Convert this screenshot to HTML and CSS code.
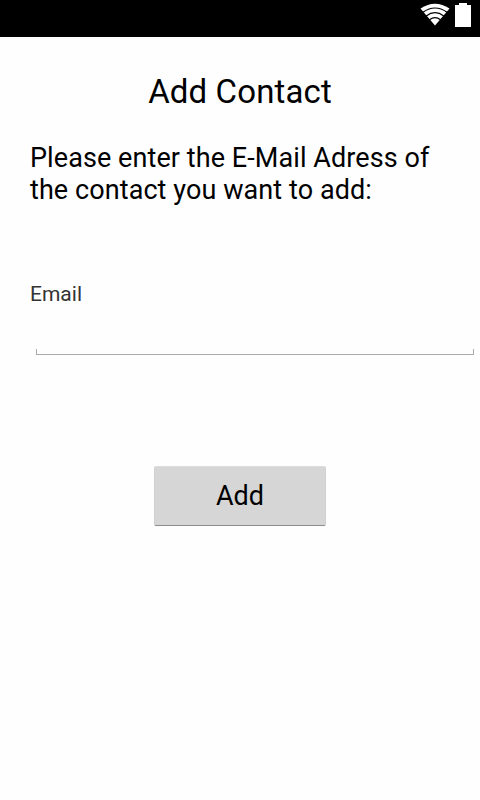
FILE: index.html
```html
<!DOCTYPE html>
<html lang="en">
<head>
<meta charset="utf-8">
<title>Add Contact</title>
<link rel="stylesheet" href="styles.css">
</head>
<body>
<header class="status">
<svg class="wifi" width="30" height="23" viewBox="0 0 30 23"><path fill="#fff" d="M.5 5.500Q15-4 29.500 5.500L15 22.500Z"/><g fill="none" stroke="#000" stroke-width="1.200"><path d="M3 9.200Q15 .8 27 9.200M6.200 13Q15 6.400 23.800 13M9.500 16.800Q15 12.400 20.500 16.800"/></g></svg>
<svg class="battery" width="16" height="24" viewBox="0 0 16 24"><path fill="#fff" d="M4 0h8v2h4v22H0V2h4z"/></svg>
</header>
<main class="screen">
<h1 class="title">Add Contact</h1>
<p class="message">Please enter the E-Mail Adress of<br>the contact you want to add:</p>
<label class="label" for="email">Email</label>
<div class="field"><input class="input" id="email" type="email"></div>
<button class="button" type="button">Add</button>
</main>
</body>
</html>
```
FILE: styles.css
```css
* { box-sizing: border-box; }
body { margin: 0; height: 800px; overflow: hidden; background: #fefefe; color: #000; font-family: Roboto, sans-serif; }
.status { display: flex; justify-content: flex-end; gap: 5px; height: 37px; padding: 3px 9px 0 0; background: #000; }
.screen { display: flex; flex-direction: column; padding: 35px 0 0 30px; }
.title { margin: 0 30px 0 0; text-align: center; font-size: 33px; line-height: 40px; font-weight: 400; letter-spacing: .12px; }
.message { margin: 30px 0 0; font-size: 27px; line-height: 32px; letter-spacing: .08px; white-space: nowrap; }
.label { margin-top: 75px; font-size: 21px; line-height: 26px; color: #333; }
.field { height: 6px; margin: 42px 6px 0; border: 1px solid #aaa; border-top: 0; }
.input { display: block; width: 100%; height: 4px; padding: 0; border: 0; outline: 0; background: transparent; }
.button { width: 172px; height: 60px; margin: 111px 0 0 124px; padding: 0 0 1px; border: 1px solid #d0d0d0; border-top-color: #ddd; border-bottom-color: #8c8c8c; border-radius: 2px; background: #d6d6d6; font: 27px Roboto, sans-serif; color: #000; }
```
